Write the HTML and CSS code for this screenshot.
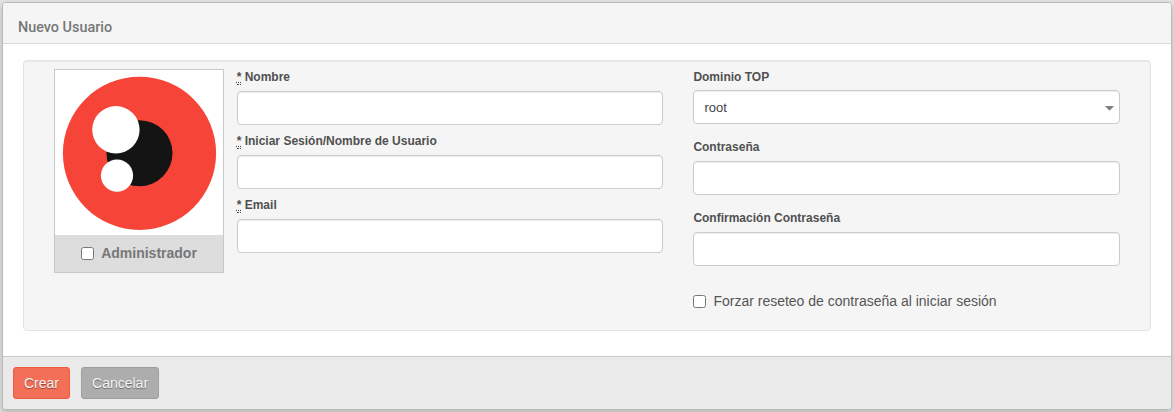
FILE: index.html
```html
<!DOCTYPE html>
<html lang="es">
<head>
<meta charset="utf-8">
<title>Nuevo Usuario</title>
<link rel="stylesheet" href="styles.css">
</head>
<body>
<form class="modal">
  <header class="modal-header"><h3 class="title">Nuevo Usuario</h3></header>
  <main class="modal-body">
    <div class="well">
      <div class="avatar">
        <svg class="avatar-image" viewBox="0 0 168 165" width="168" height="165">
          <circle cx="84.5" cy="83.3" r="76.6" fill="#f64538"/>
          <circle cx="84.5" cy="83.2" r="33" fill="#141414"/>
          <circle cx="60.9" cy="59.8" r="23.7" fill="#fff"/>
          <circle cx="62" cy="105.6" r="16.1" fill="#fff"/>
        </svg>
        <label class="admin"><input class="check" type="checkbox"><span class="admin-text">Administrador</span></label>
      </div>
      <div class="column">
        <label class="label" for="name"><abbr class="required" title="requerido">*</abbr> Nombre</label>
        <input class="field" id="name" type="text">
        <label class="label" for="login"><abbr class="required" title="requerido">*</abbr> Iniciar Sesión/Nombre de Usuario</label>
        <input class="field" id="login" type="text">
        <label class="label" for="email"><abbr class="required" title="requerido">*</abbr> Email</label>
        <input class="field" id="email" type="text">
      </div>
      <div class="column column-right">
        <label class="label">Dominio TOP</label>
        <div class="field select"><span>root</span><svg width="9" height="5" viewBox="0 0 9 5"><path d="M0 0h9L4.5 4.8z" fill="#808080"/></svg></div>
        <label class="label" for="password">Contraseña</label>
        <input class="field" id="password" type="password">
        <label class="label" for="confirm">Confirmación Contraseña</label>
        <input class="field" id="confirm" type="password">
        <label class="force"><input class="check" type="checkbox">Forzar reseteo de contraseña al iniciar sesión</label>
      </div>
    </div>
  </main>
  <footer class="modal-footer">
    <button class="button primary" type="button">Crear</button>
    <button class="button" type="button">Cancelar</button>
  </footer>
</form>
</body>
</html>
```
FILE: styles.css
```css
* { box-sizing: border-box; }
body {
  margin: 0;
  padding: 2px;
  height: 412px;
  overflow: hidden;
  background: #e2e2e2;
  color: #555;
  font: 14px/20px "Liberation Sans", Arial, sans-serif;
}
.modal {
  display: flex;
  flex-direction: column;
  width: 1170px;
  height: 408px;
  border: 1px solid #b9b9b9;
  border-radius: 4px;
  background: #fff;
  box-shadow: 0 3px 7px rgba(0, 0, 0, .2);
  overflow: hidden;
}
.modal-header {
  height: 41px;
  padding: 15px 15px 0;
  border-bottom: 1px solid #d9d9d9;
  background: #f5f5f5;
}
.title {
  margin: 0;
  color: #777;
  font: 500 14.4px/20px Roboto, sans-serif;
}
.modal-body {
  flex: 1;
  padding: 16px 20px 0;
}
.well {
  display: flex;
  height: 271px;
  padding: 8px 30px 0;
  border: 1px solid #e3e3e3;
  border-radius: 4px;
  background: #f5f5f5;
  box-shadow: inset 0 1px 1px rgba(0, 0, 0, .05);
}
.avatar {
  width: 170px;
  height: 204px;
  border: 1px solid #c8c8c8;
  background: #fff;
}
.avatar-image { display: block; }
.admin {
  display: flex;
  align-items: center;
  justify-content: center;
  height: 37px;
  background: #ddd;
  color: #777;
  font-weight: bold;
}
.admin-text { padding-bottom: 2px; }
.check {
  width: 13px;
  height: 13px;
  margin: 0 7px 0 0;
}
.column {
  display: flex;
  flex-direction: column;
  width: 426.3px;
  margin-left: 12.7px;
}
.label {
  height: 16px;
  margin-bottom: 6px;
  color: #505050;
  font-size: 12px;
  line-height: 16px;
  font-weight: bold;
}
.required {
  border-bottom: 1px dotted #505050;
  text-decoration: underline dotted;
}
.field {
  width: 100%;
  height: 34px;
  margin: 0 0 8px;
  padding: 0 10px;
  border: 1px solid #ccc;
  border-radius: 4px;
  background: #fff;
  box-shadow: inset 0 1px 1px rgba(0, 0, 0, .075);
  font: 13px/20px "Liberation Sans", Arial, sans-serif;
}
.column-right {
  width: 426.6px;
  margin-left: 30.4px;
}
.column-right .field { margin-bottom: 15px; }
.column-right .select {
  display: flex;
  align-items: center;
  justify-content: space-between;
  margin-top: -1px;
  padding: 2px 5px 0 10px;
  color: #444;
}
.force {
  display: flex;
  align-items: center;
  margin-top: 10px;
}
.modal-footer {
  display: flex;
  gap: 11px;
  height: 53px;
  padding: 10px;
  border-top: 1px solid #c8c8c8;
  background: #eaeaea;
}
.button {
  height: 32px;
  padding: 0 10px;
  border: 1px solid #9f9f9f;
  border-radius: 3px;
  background: #adadad;
  color: #f4f4f4;
  font: 14px/20px "Liberation Sans", Arial, sans-serif;
  text-shadow: 0 1px 1px rgba(0, 0, 0, .4);
}
.primary {
  border-color: #ee5b40;
  background: #f46f57;
}
```
